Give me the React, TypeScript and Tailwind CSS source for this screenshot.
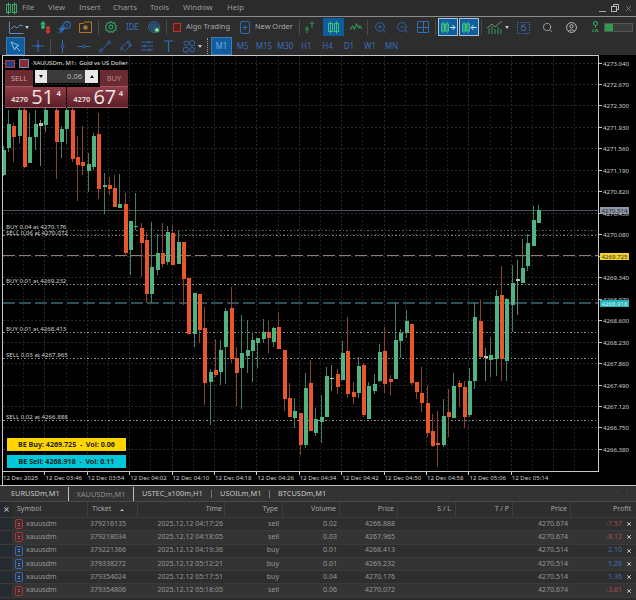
import React from "react";
import { ZoomIn, ZoomOut, Search, X } from "lucide-react";

type C = [string, number, number, number, number];
const candles: (C | null)[] = [
  ["g",150,175,146,176],["g",124,148,110,152],["o",126,137,123,162],["g",110,136,108,143],["o",110,167,108,168],
  ["g",137,163,113,163],["g",124,137,110,150],["w",123,126,120,166],["g",110,125,108,132],null,
  ["o",110,142,108,179],["g",129,142,126,158],["g",110,129,108,144],["o",110,159,108,162],["o",157,165,136,201],
  ["o",162,166,126,175],["g",164,171,153,192],["g",136,167,133,170],["o",134,189,113,199],["g",185,187,173,214],
  ["o",185,189,177,195],["o",188,207,175,207],["g",204,208,174,208],["o",204,253,193,256],["g",221,250,221,275],
  ["g",226,227,193,230],["o",228,243,223,277],["o",240,294,232,303],["g",267,294,222,303],["g",253,270,234,275],
  ["o",253,264,223,267],["g",232,262,226,265],["o",233,265,226,265],["g",242,264,230,264],["o",242,279,242,305],
  ["o",278,334,278,334],["g",293,334,293,347],["o",294,330,294,343],["o",328,383,307,405],["g",372,382,369,425],
  ["o",370,375,339,377],["g",350,372,340,385],["g",311,347,308,384],["o",308,359,287,363],["o",358,373,347,406],
  ["g",353,368,315,409],["g",350,356,320,373],["g",340,351,332,382],["g",338,343,338,368],["g",332,339,319,343],
  ["o",332,338,321,353],["g",328,342,327,347],["o",327,349,312,349],["o",350,399,350,411],["o",398,417,383,417],
  ["g",411,418,398,428],["o",413,445,413,455],["g",388,445,373,448],["o",383,431,360,431],["g",419,433,408,436],
  ["g",417,422,395,443],["g",376,417,367,417],["w",378,379,365,391],["o",374,387,369,394],["g",353,380,341,380],
  ["o",351,394,317,398],["o",392,397,382,404],["g",366,393,357,398],["o",365,415,363,417],["g",386,419,382,419],
  ["g",384,391,374,394],["g",352,381,344,382],["o",351,384,327,393],["o",379,382,375,395],["g",340,379,302,379],
  ["g",333,341,329,358],["g",321,333,310,338],["o",324,383,324,385],["o",382,392,382,399],["o",393,403,367,412],
  ["o",403,433,386,437],["o",431,446,414,447],["o",443,445,411,467],["g",416,445,399,447],["o",412,417,389,437],
  ["g",386,418,373,418],["o",383,387,380,407],["o",387,417,381,428],["g",381,415,368,417],["g",317,381,302,389],
  ["o",321,357,300,358],["w",356,358,348,381],["g",355,360,337,377],["g",296,359,290,376],["o",295,359,266,381],
  ["g",299,361,298,381],["g",283,305,265,332],["w",279,281,260,315],["g",268,283,239,283],["g",243,266,234,271],
  ["g",220,246,206,246],["g",210,223,205,223],
];

const prices = ["4273.040","4272.670","4272.300","4271.930","4271.560","4271.190","4270.820","4270.450","4270.080","","4269.340","4268.970","4268.600","4268.230","4267.860","4267.490","4267.120","4266.750","4266.380"];
const times = ["12 Dec 2025","12 Dec 03:46","12 Dec 03:54","12 Dec 04:02","12 Dec 04:10","12 Dec 04:18","12 Dec 04:26","12 Dec 04:34","12 Dec 04:42","12 Dec 04:50","12 Dec 04:58","12 Dec 05:06","12 Dec 05:14"];

const orders = [
  { t: "BUY 0.04 at 4270.176", y: 226 },
  { t: "SELL 0.06 at 4270.072", y: 232 },
  { t: "BUY 0.01 at 4269.232", y: 280.5 },
  { t: "BUY 0.01 at 4268.413", y: 328 },
  { t: "SELL 0.03 at 4267.965", y: 354 },
  { t: "SELL 0.02 at 4266.888", y: 416 },
];

const rows = [
  ["379216135","2025.12.12 04:17:26","sell","0.02","4266.888","4270.674","-7.57"],
  ["379218034","2025.12.12 04:18:05","sell","0.03","4267.965","4270.674","-8.12"],
  ["379221366","2025.12.12 04:19:36","buy","0.01","4268.413","4270.514","2.10"],
  ["379338272","2025.12.12 05:12:21","buy","0.01","4269.232","4270.514","1.28"],
  ["379354024","2025.12.12 05:17:51","buy","0.04","4270.176","4270.514","1.36"],
  ["379354806","2025.12.12 05:18:05","sell","0.06","4270.072","4270.674","-3.61"],
];

const BLUE = "#2f6db8";
const GREEN = "#2f9c5b";

function Sep({ cls }: { cls: string }) {
  return <div className={`w-px h-[15px] bg-[#4a4a4a] ${cls}`} />;
}
function Tri({ cls }: { cls: string }) {
  return <div className={`w-0 h-0 border-x-[2.5px] border-x-transparent border-t-[3px] border-t-[#c8c8c8] ${cls}`} />;
}
function Candles({ c = "#3fc07a" }: { c?: string }) {
  return (
    <svg width="13" height="13" viewBox="0 0 13 13" fill="none" stroke={c} strokeWidth="1">
      <path d="M3.5 0.5v12M9.5 0.5v12" />
      <rect x="1.5" y="2.5" width="4" height="8" />
      <rect x="7.5" y="2.5" width="4" height="8" />
    </svg>
  );
}
function ShiftIcon({ flip }: { flip?: boolean }) {
  return (
    <svg width="16" height="13" viewBox="0 0 16 13" fill="none" strokeWidth="1">
      <g stroke="#3fc07a">
        <path d="M3 0.5v12" />
        <rect x="1.5" y="3" width="3" height="7" />
        <path d="M7 0.5v12" />
        <rect x="5.5" y="3" width="3" height="7" />
      </g>
      <path d={flip ? "M15.5 6.5h-5M12.5 4l-2.5 2.5 2.5 2.5" : "M10 6.5h5M12.5 4l2.5 2.5-2.5 2.5"} stroke="#d8e8f5" />
    </svg>
  );
}

function Toolbar1() {
  return (
    <div className="flex items-center h-[20px] bg-[#2d2d2d]">
      <div className="ml-[9px] w-[15px]">
        <svg width="15" height="13" viewBox="0 0 15 13" fill="none" stroke="#5f86c0" strokeWidth="1"><path d="M0.5 0.5v12h14" /><path d="M2 8l3-3 3 2 3-3 3 1" /></svg>
      </div>
      <Tri cls="ml-[1px]" />
      <div className="ml-[11px] w-[11px]">
        <svg width="11" height="13" viewBox="0 0 11 13" strokeWidth="1.2"><path d="M3 7V3M0.8 3.5L3 0.8l2.2 2.7" stroke="#30b070" fill="#30b070" /><path d="M8 6v4M5.8 9.5L8 12.2l2.2-2.7" stroke="#c83a32" fill="#c83a32" /><circle cx="8" cy="7" r="2" fill="#c83a32" /><circle cx="3" cy="6" r="2" fill="#30b070" /></svg>
      </div>
      <div className="ml-[7px] w-[13px]">
        <svg width="13" height="13" viewBox="0 0 13 13" fill="none" stroke={BLUE} strokeWidth="1.1"><circle cx="9" cy="4" r="3.4" /><path d="M9 2.5v3" /><circle cx="4" cy="8" r="1.6" fill={BLUE} /><path d="M0.5 12.5L4 8M4 4v8M0 8h7" /></svg>
      </div>
      <div className="ml-[8px] w-[13px]">
        <svg width="13" height="12" viewBox="0 0 13 12" fill="none" stroke="#b0762a" strokeWidth="1"><path d="M0.5 2.5h4l1-1.5h7v10.5h-12z" /><path d="M5 5h3v3H5z" fill="#b0762a" /></svg>
      </div>
      <Sep cls="ml-[6px]" />
      <div className="ml-[6px] w-[12px]">
        <svg width="12" height="12" viewBox="0 0 12 12" fill="none" stroke={GREEN} strokeWidth="1.2"><path d="M6 0.8l1.6 1.3 2-.1.4 2 1.5 1.3-1 1.7.3 2-2 .6-1 1.7-1.9-.8-1.9.8-1-1.7-2-.6.3-2-1-1.7L1.8 4l.4-2 2-.1z" /><circle cx="6" cy="6" r="1.8" /></svg>
      </div>
      <div className="ml-[9px] w-[12px] text-[8px] leading-none text-[#3a6fbe] text-center whitespace-nowrap">IDE</div>
      <div className="ml-[10px] w-[12px]">
        <svg width="12" height="12" viewBox="0 0 12 12" fill="none" stroke={BLUE} strokeWidth="1"><circle cx="6" cy="6" r="5.3" /><circle cx="6" cy="6" r="3.2" /><circle cx="6" cy="6" r="1.2" /><circle cx="9" cy="9" r="2.6" fill={GREEN} stroke="none" /><path d="M9 7.5v3M7.5 9h3" stroke="#e4f4ea" /></svg>
      </div>
      <Sep cls="ml-[6px]" />
      <div className="ml-[6px] w-[8px] h-[9px] border border-[#b8362f] bg-[#5a1f1c]" />
      <div className="ml-[5px] w-[44px] text-[7.4px] text-[#a8a8a8] whitespace-nowrap">Algo Trading</div>
      <div className="ml-[10px] w-[10px]">
        <svg width="10" height="13" viewBox="0 0 10 13" fill="none" stroke={BLUE} strokeWidth="1"><rect x="0.5" y="0.5" width="9" height="12" rx="1.5" /><path d="M5 4v5M2.5 6.5h5" /></svg>
      </div>
      <div className="ml-[5px] w-[37px] text-[7.4px] text-[#a8a8a8] whitespace-nowrap">New Order</div>
      <Sep cls="ml-[7px]" />
      <div className="ml-[5px] w-[9px]">
        <svg width="9" height="13" viewBox="0 0 9 13" fill="none" stroke={GREEN} strokeWidth="1"><path d="M2 5v7M0 8h4M7 1v6M5 3l2-2 2 2" /></svg>
      </div>
      <div className="ml-[9px] w-[21px] h-[18px] bg-[#0f5c9e] flex items-center justify-center"><Candles /></div>
      <div className="ml-[6px] w-[11px]">
        <svg width="12" height="8" viewBox="0 0 12 8" fill="none" stroke={GREEN} strokeWidth="1.1"><path d="M0 7l2.5-4 2 3 2-5 2.5 4L10 3l2 3" /></svg>
      </div>
      <Sep cls="ml-[6px]" />
      <ZoomIn className="ml-[6px] w-[13px] h-[13px] text-[#2f6db8]" strokeWidth={1.5} />
      <ZoomOut className="ml-[9px] w-[13px] h-[13px] text-[#2f6db8]" strokeWidth={1.5} />
      <div className="ml-[8px] w-[12px] h-[12px] border border-[#2f6db8] rounded-[1px] relative">
        <div className="absolute left-[4.5px] top-0 bottom-0 w-px bg-[#2f6db8]" />
        <div className="absolute top-[4.5px] left-0 right-0 h-px bg-[#2f6db8]" />
      </div>
      <Sep cls="ml-[6px]" />
      <div className="ml-[2px] w-[20px] h-[18px] bg-[#0f5c9e] border border-[#a8c4dc] flex items-center justify-center"><ShiftIcon /></div>
      <div className="ml-[1px] w-[20px] h-[18px] bg-[#0f5c9e] border border-[#a8c4dc] flex items-center justify-center"><ShiftIcon flip /></div>
      <Sep cls="ml-[2px]" />
      <div className="ml-[5px] w-[16px]">
        <svg width="16" height="13" viewBox="0 0 16 13" fill="none" stroke={GREEN} strokeWidth="1"><path d="M2 7v6M5 5v8M8 8v5M11 6v7M14 8v5" /><path d="M0 7l5-4 3 3 7-6" stroke="#6f8f7d" /></svg>
      </div>
      <Tri cls="ml-[2px]" />
      <div className="ml-[8px] w-[12px]">
        <svg width="13" height="13" viewBox="0 0 13 13" fill="none" stroke={BLUE} strokeWidth="1"><rect x="0.5" y="1.5" width="12" height="11" strokeDasharray="1.5 1.2" /><circle cx="6.5" cy="7.5" r="2.2" /><path d="M4 4.5h2l.7-1h1.5" /></svg>
      </div>
      <Search className="ml-[13px] w-[11px] h-[11px] text-[#c0c0c0]" strokeWidth={1.5} />
      <div className="ml-[13px] w-[10px]">
        <svg width="11" height="11" viewBox="0 0 11 11" fill="none" stroke="#c0c0c0" strokeWidth="1"><circle cx="5.5" cy="5.5" r="4.9" /><circle cx="5.5" cy="4.3" r="1.6" /><path d="M2.6 9.2c.6-1.8 5.2-1.8 5.800 0" /></svg>
      </div>
      <div className="ml-[15px] w-[9px] flex flex-col items-center">
        <svg width="7" height="7" viewBox="0 0 7 7" fill="none" stroke={GREEN} strokeWidth="1.2"><circle cx="3.5" cy="2.5" r="2" /><path d="M3.500 4.500V7" /></svg>
        <span className="text-[4px] leading-[5px] font-bold text-[#3aa868]">LVL</span>
      </div>
      <div className="ml-[4px] w-[29px] h-[9px] bg-[#3c3c3c] border border-[#555] flex">
        <div className="w-[8px] bg-[#2f9c4c]" />
      </div>
    </div>
  );
}

function IconBox({ cls, children }: { cls: string; children: React.ReactNode }) {
  return <div className={`w-[12px] h-[13px] flex items-center justify-center ${cls}`}>{children}</div>;
}

function Toolbar2() {
  const tf = ["M5", "M15", "M30", "H1", "H4", "D1", "W1", "MN"];
  return (
    <div className="flex items-center h-[18px] bg-[#2d2d2d]">
      <div className="ml-[6px] w-[19px] h-[18px] bg-[#0f5c9e] border border-[#3a7cb8] flex items-center justify-center">
        <svg width="11" height="11" viewBox="0 0 11 11" fill="none" stroke="#8fc0e8" strokeWidth="1"><path d="M1 1l8 3.500-3 1.400L4.600 9z" /><path d="M6 6l4 4" /></svg>
      </div>
      <IconBox cls="ml-[7px]"><svg width="12" height="12" viewBox="0 0 12 12" fill="none" stroke={BLUE} strokeWidth="1"><path d="M6 0v12M0 6h12" /><circle cx="6" cy="6" r="1" fill={BLUE} /></svg></IconBox>
      <Sep cls="ml-[6px]" />
      <IconBox cls="ml-[5px]"><svg width="5" height="13" viewBox="0 0 5 13" fill="none" stroke={BLUE} strokeWidth="1"><path d="M2.500 0v13" /><circle cx="2.500" cy="6.500" r="1.500" fill="#2d2d2d" /></svg></IconBox>
      <IconBox cls="ml-[10px]"><svg width="13" height="5" viewBox="0 0 13 5" fill="none" stroke={BLUE} strokeWidth="1"><path d="M0 2.500h13" /><circle cx="6.500" cy="2.500" r="1.500" fill="#2d2d2d" /></svg></IconBox>
      <IconBox cls="ml-[9px]"><svg width="13" height="13" viewBox="0 0 13 13" fill="none" stroke={BLUE} strokeWidth="1"><path d="M2.500 10.500l8-8" /><circle cx="2" cy="11" r="1.500" /><circle cx="11" cy="2" r="1.500" /></svg></IconBox>
      <IconBox cls="ml-[9px]"><svg width="13" height="13" viewBox="0 0 13 13" fill="none" stroke={BLUE} strokeWidth="1"><path d="M1 8l7-7M5 12l7-7" /><circle cx="1.800" cy="9" r="1.300" /><circle cx="9" cy="1.800" r="1.300" /><circle cx="11" cy="5" r="1.300" /></svg></IconBox>
      <IconBox cls="ml-[9px]"><svg width="14" height="12" viewBox="0 0 14 12" fill="none" stroke={BLUE} strokeWidth="1"><path d="M0 1.500h14M0 6h14M0 10.500h14" /><circle cx="9" cy="1.500" r="1" /><circle cx="4" cy="6" r="1" /><circle cx="10" cy="10.500" r="1" /></svg></IconBox>
      <IconBox cls="ml-[9px]"><svg width="11" height="12" viewBox="0 0 11 12" fill="none" stroke={BLUE} strokeWidth="1.200"><path d="M0.500 1h10M5.500 1v11" /></svg></IconBox>
      <IconBox cls="ml-[9px]"><svg width="13" height="13" viewBox="0 0 13 13" fill="none" stroke={BLUE} strokeWidth="1"><circle cx="3.500" cy="3" r="2.500" /><rect x="7.500" y="0.500" width="5" height="5" rx="1" /><rect x="0.500" y="7.500" width="5" height="5" rx="1" /><rect x="7.500" y="7.500" width="5" height="5" rx="2.500" /></svg></IconBox>
      <Tri cls="ml-[3px]" />
      <div className="ml-[5px] w-px h-[16px] border-l border-dotted border-[#9a9a9a]" />
      <div className="ml-[3px] w-[21px] h-[18px] bg-[#0f5c9e] border border-[#3a7cb8] flex items-center justify-center text-[8px] text-[#6fa8e0]">M1</div>
      {tf.map((t) => (
        <div key={t} className="w-[21.25px] text-center text-[8px] text-[#3a6cb8]">{t}</div>
      ))}
    </div>
  );
}

function TradePanel() {
  return (
    <div className="absolute left-[5px] top-[15px] w-[123px] h-[38px] z-10 text-[#e8d4d6]">
      <div className="flex h-[17px]">
        <div className="w-[28px] h-[17px] bg-[#6b2a32] border-b border-[#9a5a60] text-center text-[7.500px] leading-[16px] text-[#c8a8aa]">SELL</div>
        <div className="ml-[2px] w-[63px] h-[13px] bg-[#3a3a3a] flex items-center">
          <div className="w-[12px] h-[13px] bg-[#e8e8e8] flex items-center justify-center"><div className="w-0 h-0 border-x-[2.500px] border-x-transparent border-t-[3px] border-t-[#111]" /></div>
          <div className="flex-1 text-right pr-[3px] text-[7.500px] text-[#b4b4b4]">0.06</div>
          <div className="w-[13px] h-[13px] bg-[#e8e8e8] flex items-center justify-center"><div className="w-0 h-0 border-x-[2.500px] border-x-transparent border-b-[3px] border-b-[#111]" /></div>
        </div>
        <div className="ml-[2px] w-[28px] h-[17px] bg-[#6b2a32] border-b border-[#9a5a60] text-center text-[7.500px] leading-[16px] text-[#b08c90]">BUY</div>
      </div>
      <div className="flex gap-[1.500px] h-[21px]">
        {[["51"], ["67"]].map(([n]) => (
          <div key={n} className="flex-1 bg-gradient-to-b from-[#8f3d47] to-[#5c1f28] border-b border-[#a06068] flex items-end pl-[6px] relative">
            <span className="text-[7.500px] font-bold text-[#e0d0d2] leading-[13px] mb-[1px]">4270</span>
            <span className="ml-[3px] text-[20px] leading-[21px] text-[#f2e4e5] [font-family:'Open_Sans',sans-serif]">{n}</span>
            <span className="absolute right-[5px] top-[1px] text-[7.500px] font-bold leading-[10px] text-[#e8d8da]">4</span>
          </div>
        ))}
      </div>
    </div>
  );
}

function Chart() {
  const gridV = Array.from({ length: 28 }, (_, k) => 2.5 + 21.2 * k);
  const gridH = prices.map((_, k) => 63 + 21.47 * k);
  return (
    <div className="relative h-[430px] bg-black overflow-hidden">
      <svg className="absolute left-0 top-0" width="636" height="430" viewBox="0 55 636 430" shapeRendering="crispEdges">
        {gridV.map((x, k) => x < 598 && (
          <line key={k} x1={x} x2={x} y1="56" y2="471" stroke={k % 2 === 0 ? "#2a2a2a" : "#1c1c1c"} strokeDasharray="2 2" />
        ))}
        {gridH.map((y, k) => (
          <line key={k} x1="3" x2="598" y1={y} y2={y} stroke="#282828" strokeDasharray="2 2" />
        ))}
        <line x1="3" x2="598" y1="230.500" y2="230.500" stroke="#4c6650" strokeDasharray="1.500 2" />
        <line x1="3" x2="598" y1="235.500" y2="235.500" stroke="#7a7a6e" strokeDasharray="1.500 2" />
        <line x1="3" x2="598" y1="284.500" y2="284.500" stroke="#8c8c8c" strokeDasharray="1.500 2" />
        <line x1="3" x2="598" y1="332.500" y2="332.500" stroke="#8c8c8c" strokeDasharray="1.500 2" />
        <line x1="3" x2="598" y1="358.500" y2="358.500" stroke="#8c8c8c" strokeDasharray="1.500 2" />
        <line x1="3" x2="598" y1="420.500" y2="420.500" stroke="#8c8c8c" strokeDasharray="1.500 2" />
        <line x1="3" x2="598" y1="210.500" y2="210.500" stroke="#4e5260" />
        <line x1="3" x2="598" y1="255.500" y2="255.500" stroke="#8f7f76" strokeDasharray="12 4" />
        <line x1="3" x2="598" y1="303" y2="303" stroke="#2a4f55" strokeWidth="1.500" strokeDasharray="12 4" />
        {candles.map((c, i) => {
          if (!c) return null;
          const x = Math.round(2.9 + 5.298 * i);
          const col = c[0] === "o" ? "#e8572a" : c[0] === "g" ? "#4fb384" : "#b8c8b8";
          const wick = c[0] === "o" ? "#8a4230" : c[0] === "g" ? "#437f64" : "#6f7f74";
          return (
            <g key={i}>
              <line x1={x + 0.500} x2={x + 0.500} y1={c[3]} y2={c[4]} stroke={wick} />
              <rect x={x - 1} y={c[1]} width="4" height={Math.max(c[2] - c[1], 1)} fill={col} />
            </g>
          );
        })}
        <path d="M2.500 485V55.500H598.500V471.500H2.500" fill="none" stroke="#c8c8c8" />
        {prices.map((_, k) => (
          <line key={k} x1="598" x2="602" y1={gridH[k]} y2={gridH[k]} stroke="#c8c8c8" />
        ))}
        {times.map((_, k) => (
          <line key={k} x1={2.5 + 42.4 * k} x2={2.5 + 42.4 * k} y1="471" y2="475" stroke="#c8c8c8" />
        ))}
      </svg>

      <div className="absolute left-[5px] top-[4px] flex items-center z-10">
        <div className="w-[10px] h-[8px] bg-[#2c3f7a] border border-[#b04040]" />
        <div className="ml-[4px] w-[10px] h-[9px] bg-[#8a2c2c] border border-[#6a88c8]" />
        <span className="ml-[4px] text-[6px] leading-[9px] text-[#e0e0e0] whitespace-pre">XAUUSDm, M1:  Gold vs US Doller</span>
      </div>
      <TradePanel />

      {orders.map((o) => (
        <span key={o.t} className="absolute left-[6px] text-[6.100px] leading-[5px] text-[#d4d4d4] whitespace-nowrap" style={{ top: o.y - 55 - 2.5 }}>{o.t}</span>
      ))}

      {prices.map((p, k) => p && (
        <span key={p} className="absolute left-[603px] text-[6.100px] leading-[9px] text-[#cfcfcf]" style={{ top: gridH[k] - 55 - 4.500 }}>{p}</span>
      ))}
      <span className="absolute left-[600px] top-[152px] w-[29px] h-[7px] bg-[#8c98a8] text-[6.100px] leading-[7px] text-[#22262c] text-center">4270.514</span>
      <span className="absolute left-[600px] top-[198px] w-[29px] h-[7px] bg-[#f2d22e] text-[6.100px] leading-[7px] text-[#333] text-center">4269.725</span>
      <span className="absolute left-[600px] top-[245px] w-[29px] h-[7px] bg-[#22b4bc] text-[6.100px] leading-[7px] text-[#d8f4f4] text-center">4268.918</span>

      <div className="absolute left-[7px] top-[383px] w-[119px] h-[13px] bg-[#ffd400] text-center text-[7.100px] font-bold leading-[13px] text-[#222] whitespace-pre">BE Buy: 4269.725  -  Vol: 0.06</div>
      <div className="absolute left-[7px] top-[400px] w-[119px] h-[13px] bg-[#00c8d8] text-center text-[7.100px] font-bold leading-[13px] text-[#222] whitespace-pre">BE Sell: 4268.918  -  Vol: 0.11</div>

      {times.map((t, k) => (
        <span key={t} className="absolute top-[418px] text-[6.100px] leading-[9px] text-[#cfcfcf] whitespace-nowrap" style={{ left: 2.5 + 42.4 * k + 0.5 }}>{t}</span>
      ))}
    </div>
  );
}

function Tabs() {
  return (
    <div className="flex items-center h-[17px] bg-[#333333] border-t border-[#bdbdbd] border-b-[#4a4a4a] border-b text-[7.400px] text-[#c4c4c4] whitespace-nowrap">
      <span className="ml-[11px] w-[57px]">EURUSDm,M1</span>
      <span className="w-[66px] h-[14px] leading-[14px] border-x border-[#bdbdbd] text-center text-[#8e8e8e]">XAUUSDm,M1</span>
      <span className="ml-[8px] w-[69px]">USTEC_x100m,H1</span>
      <span className="w-px h-[8px] bg-[#777]" />
      <span className="ml-[8px] w-[49px]">USOILm,M1</span>
      <span className="w-px h-[8px] bg-[#777]" />
      <span className="ml-[8px] w-[46px]">BTCUSDm,M1</span>
      <span className="ml-auto mr-[7px] text-[#555] text-[7px]">‹</span>
      <span className="mr-[8px] text-[#555] text-[7px]">›</span>
    </div>
  );
}

const cols = "grid grid-cols-[12px_76px_50px_87px_58px_57px_58px_58px_57px_58px_65px]";

function Table() {
  return (
    <div className="flex-1 bg-[#2a2a2a] text-[7px] text-[#969696] overflow-hidden">
      <div className={`${cols} h-[16px] items-center bg-[#2e2e2e] border-b border-[#3c3c3c] text-[#a4a4a4]`}>
        <div className="h-full flex items-center justify-center bg-[#252a30]"><X className="w-[7px] h-[7px] text-[#c0c0c0]" strokeWidth={3.500} /></div>
        <div className="h-full pl-[5px] flex items-center border-r border-[#3c3c3c]">Symbol</div>
        <div className="h-full pl-[4px] flex items-center border-r border-[#3c3c3c]">Ticket<div className="ml-[9px] w-0 h-0 border-x-[2px] border-x-transparent border-b-[2.500px] border-b-[#c0c0c0]" /></div>
        <div className="h-full pr-[2px] flex items-center justify-end border-r border-[#3c3c3c]">Time</div>
        <div className="h-full pr-[4px] flex items-center justify-end border-r border-[#3c3c3c]">Type</div>
        <div className="h-full pr-[3px] flex items-center justify-end border-r border-[#3c3c3c]">Volume</div>
        <div className="h-full pr-[3px] flex items-center justify-end border-r border-[#3c3c3c]">Price</div>
        <div className="h-full pr-[4px] flex items-center justify-end border-r border-[#3c3c3c]">S / L</div>
        <div className="h-full pr-[3px] flex items-center justify-end border-r border-[#3c3c3c]">T / P</div>
        <div className="h-full pr-[3px] flex items-center justify-end border-r border-[#3c3c3c]">Price</div>
        <div className="h-full pr-[5px] flex items-center justify-end">Profit</div>
      </div>
      {rows.map((r, i) => {
        const sell = r[2] === "sell";
        return (
          <div key={r[0]} className={`${cols} h-[13.300px] items-center border-b border-[#3a3a3a] ${i % 2 === 0 ? "bg-[#2e2e2e]" : "bg-[#343434]"}`}>
            <div className="h-full bg-[#252a30]" />
            <div className="flex items-center pl-[3px]">
              <div className={`w-[8px] h-[10px] rounded-[1.500px] border flex items-center justify-center ${sell ? "border-[#9a3c3c] bg-[#4a2a2a]" : "border-[#3a6cb0] bg-[#26344a]"}`}>
                <div className={`w-[2px] h-[3px] border-y ${sell ? "border-[#b06060]" : "border-[#6090d0]"}`} />
              </div>
              <span className="ml-[3px]">xauusdm</span>
            </div>
            <div className="pl-[2px]">{r[0]}</div>
            <div className="text-right pr-[2px]">{r[1]}</div>
            <div className="text-right pr-[4px]">{r[2]}</div>
            <div className="text-right pr-[3px]">{r[3]}</div>
            <div className="text-right pr-[3px]">{r[4]}</div>
            <div />
            <div />
            <div className="text-right pr-[3px]">{r[5]}</div>
            <div className="flex items-center justify-end pr-[4px]">
              <span className={sell ? "text-[#a84c4c]" : "text-[#3a70b8]"}>{r[6]}</span>
              <X className="ml-[4px] w-[6px] h-[6px] text-[#c0c0c0]" strokeWidth={4} />
            </div>
          </div>
        );
      })}
    </div>
  );
}

export default function App() {
  return (
    <div className="w-[636px] h-[600px] flex flex-col overflow-hidden bg-[#2d2d2d] [font-family:'Noto_Sans',sans-serif]">
      <div className="flex items-center h-[17px] bg-[#2b2b2b] border-b border-[#8c8c8c] text-[7.800px] text-[#9a9a9a] relative">
        <div className="ml-[5px] w-[10px]"><Candles c="#3aa868" /></div>
        <span className="ml-[7px] w-[26px]">File</span>
        <span className="w-[31px]">View</span>
        <span className="w-[34px]">Insert</span>
        <span className="w-[37px]">Charts</span>
        <span className="w-[33px]">Tools</span>
        <span className="w-[44px]">Window</span>
        <span>Help</span>
        <div className="ml-auto mr-[3px] flex items-center gap-[5px] text-[#a8a8a8]">
          <div className="w-[7px] h-px bg-[#a8a8a8] mt-[6px]" />
          <svg width="8" height="8" viewBox="0 0 8 8" fill="none" stroke="#b8b8b8"><rect x="0.500" y="2.500" width="5" height="5" /><path d="M2.500 2.500v-2h5v5h-2" /></svg>
          <X className="w-[9px] h-[9px]" strokeWidth={1.500} />
        </div>
      </div>
      <Toolbar1 />
      <Toolbar2 />
      <Chart />
      <Tabs />
      <Table />
    </div>
  );
}
